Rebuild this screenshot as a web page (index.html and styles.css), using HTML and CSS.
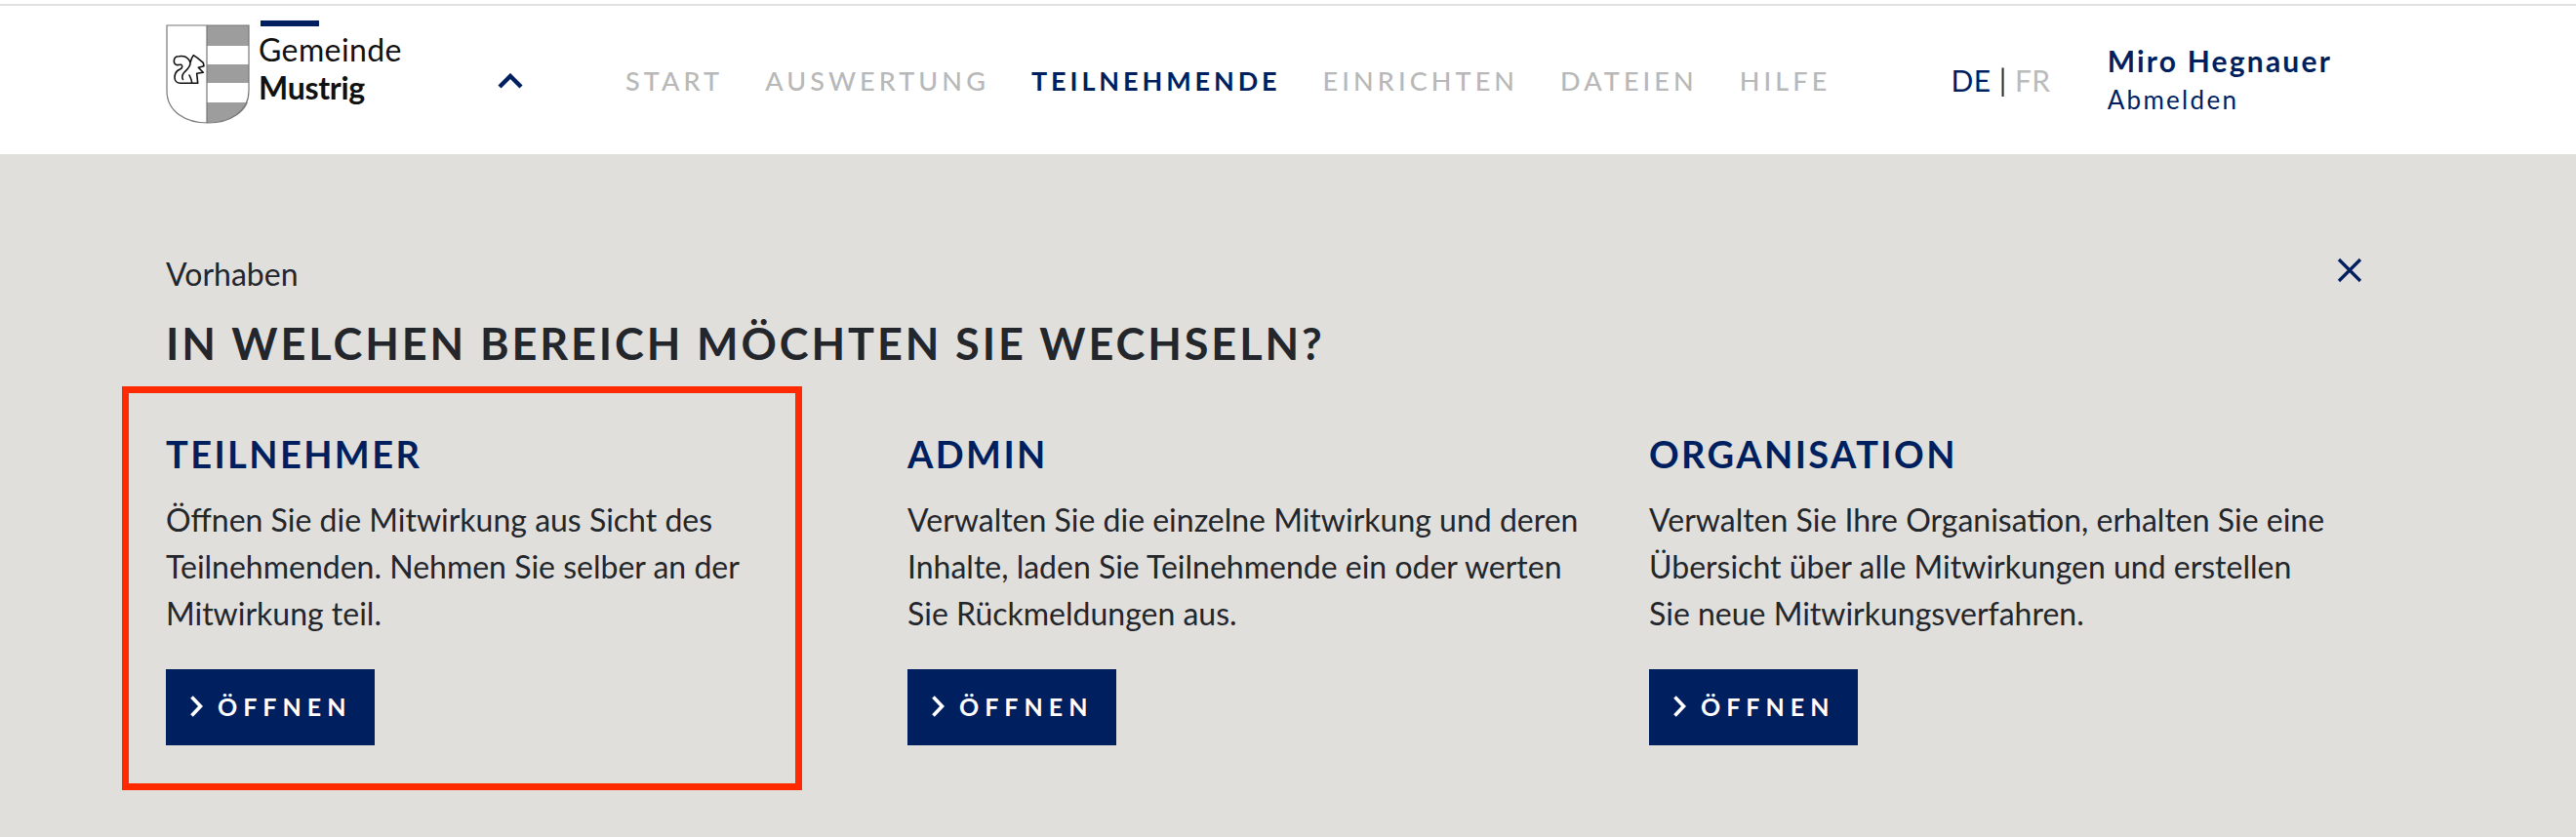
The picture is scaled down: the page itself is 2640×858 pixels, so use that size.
FILE: index.html
```html
<!DOCTYPE html>
<html lang="de">
<head>
<meta charset="utf-8">
<title>Gemeinde Mustrig</title>
<link rel="stylesheet" href="styles.css">
</head>
<body>
<div class="top-strip"></div>
<header class="header">
  <div class="brand">
    <svg class="crest" viewBox="0 0 86 102" width="86" height="102">
      <path d="M42 1H85V22H42Z M42 41H85V60H42Z M42 80H84C80 92 64 100 42 101Z" fill="#9d9d9d"/>
      <path d="M1 1H85V68C85 90 65 101 43 101C21 101 1 90 1 68Z M42 1V101" fill="none" stroke="#777" stroke-width="1.2"/>
      <path d="M31.7 60.3H15C11 60.3 9 57.5 9 54.3C9 51 10 49.3 11.7 47.7C13.5 46 16.7 46 16.7 43.5C16.7 41 15.7 41 13 41.5C10.5 42 8.3 40.5 8.3 37.7C8.3 34.5 10.5 32.7 13.3 32.7C17 32.2 20 32.5 21.7 34.3C23.8 35.8 24.8 37.8 25 39.3L26.7 34.3L28.3 31.7L32.3 34.3L38.3 39.3L39 42.7L33.3 44.3L38.3 49.3L31.7 50.3L32.7 60.3M25 39.3C25.5 43 22 46 19 49C16.5 51.5 16.3 55 17.5 56.5M24 52C26 56 27 58 26.5 60.3" fill="none" stroke="#111" stroke-width="1.6" stroke-linejoin="round" stroke-linecap="round"/>
    </svg>
    <div class="brand-text">
      <span class="brand-rule"></span>
      <span class="brand-top">Gemeinde</span>
      <span class="brand-name">Mustrig</span>
    </div>
  </div>
  <svg class="caret" viewBox="0 0 26 16" width="26" height="16"><path d="M2 14L13 3L24 14" fill="none" stroke="#001f5f" stroke-width="4.4"/></svg>
  <nav class="nav">
    <a class="nav-link">START</a>
    <a class="nav-link">AUSWERTUNG</a>
    <a class="nav-link is-active">TEILNEHMENDE</a>
    <a class="nav-link">EINRICHTEN</a>
    <a class="nav-link">DATEIEN</a>
    <a class="nav-link">HILFE</a>
  </nav>
  <div class="lang"><span class="lang-on">DE</span> <span class="lang-sep">|</span> <span class="lang-off">FR</span></div>
  <div class="user">
    <strong class="user-name">Miro Hegnauer</strong>
    <a class="user-out">Abmelden</a>
  </div>
</header>
<main class="panel">
  <div class="panel-top">
    <div class="eyebrow">Vorhaben</div>
    <svg class="close" viewBox="0 0 26 26" width="26" height="26"><path d="M2 2L24 24M24 2L2 24" fill="none" stroke="#001f5f" stroke-width="3.2"/></svg>
  </div>
  <h1 class="title">IN WELCHEN BEREICH MÖCHTEN SIE WECHSELN?</h1>
  <div class="cols">
    <section class="col">
      <div class="highlight"></div>
      <h2 class="col-title">TEILNEHMER</h2>
      <p class="col-text">Öffnen Sie die Mitwirkung aus Sicht des<br>Teilnehmenden. Nehmen Sie selber an der<br>Mitwirkung teil.</p>
      <a class="btn"><svg class="btn-icon" viewBox="0 0 14 24" width="14" height="24"><path d="M2.5 2.5L11.5 12L2.5 21.5" fill="none" stroke="#fff" stroke-width="3.6"/></svg>ÖFFNEN</a>
    </section>
    <section class="col">
      <h2 class="col-title">ADMIN</h2>
      <p class="col-text">Verwalten Sie die einzelne Mitwirkung und deren<br>Inhalte, laden Sie Teilnehmende ein oder werten<br>Sie Rückmeldungen aus.</p>
      <a class="btn"><svg class="btn-icon" viewBox="0 0 14 24" width="14" height="24"><path d="M2.5 2.5L11.5 12L2.5 21.5" fill="none" stroke="#fff" stroke-width="3.6"/></svg>ÖFFNEN</a>
    </section>
    <section class="col">
      <h2 class="col-title">ORGANISATION</h2>
      <p class="col-text">Verwalten Sie Ihre Organisation, erhalten Sie eine<br>Übersicht über alle Mitwirkungen und erstellen<br>Sie neue Mitwirkungsverfahren.</p>
      <a class="btn"><svg class="btn-icon" viewBox="0 0 14 24" width="14" height="24"><path d="M2.5 2.5L11.5 12L2.5 21.5" fill="none" stroke="#fff" stroke-width="3.6"/></svg>ÖFFNEN</a>
    </section>
  </div>
</main>
</body>
</html>
```
FILE: styles.css
```css
* { box-sizing: border-box; }
html, body { margin: 0; height: 100%; }
body { background: #e1dfdb; font-family: "Lato", "Liberation Sans", sans-serif; color: #23262b; overflow: hidden; }
.top-strip { height: 4px; background: #fff; }
.header { height: 154px; background: #fff; border-top: 2px solid #e0e0e3; display: flex; align-items: center; padding-left: 170px; }
.brand { display: flex; width: 340px; align-items: flex-start; margin-top: -16px; }
.crest { display: block; margin-top: 4px; }
.brand-text { display: flex; flex-direction: column; margin-left: 9px; }
.brand-rule { width: 60px; height: 6px; background: #001f5f; margin-left: 2px; }
.brand-top { font-size: 32px; line-height: 39px; margin-top: 4px; color: #111; letter-spacing: 0.4px; }
.brand-name { font-size: 32px; line-height: 39px; font-weight: 700; color: #111; letter-spacing: -0.3px; }
.caret { margin-top: 2px; }
.nav { display: flex; gap: 43px; margin-left: 105px; }
.nav-link { font-size: 27px; letter-spacing: 4.1px; color: #b8b8b8; font-weight: 500; }
.nav-link.is-active { color: #001f5f; font-weight: 700; letter-spacing: 3.9px; }
.lang { margin-left: 123px; font-size: 30px; letter-spacing: 0.5px; }
.lang-on { color: #001f5f; }
.lang-sep { color: #333; }
.lang-off { color: #bbb; }
.user { display: flex; flex-direction: column; margin-left: 58px; }
.user-name { font-size: 30px; color: #001f5f; letter-spacing: 2.2px; line-height: 40px; font-weight: 700; }
.user-out { font-size: 26px; color: #001f5f; letter-spacing: 2.3px; line-height: 40px; }
.panel { padding: 104px 200px 0 170px; }
.panel-top { display: flex; justify-content: space-between; align-items: center; height: 36px; }
.eyebrow { font-size: 32px; color: #23262b; }
.close { margin-right: 19px; margin-bottom: 7px; }
.title { margin: 26px 0 0; font-size: 45px; line-height: 56px; font-weight: 700; letter-spacing: 2.9px; color: #23262b; }
.cols { display: grid; grid-template-columns: repeat(3, 760px); margin-top: 61px; }
.col { position: relative; }
.highlight { position: absolute; left: -45px; top: -45px; width: 697px; height: 414px; border: 7px solid #ff2a00; }
.col-title { margin: 0; font-size: 38px; line-height: 48px; letter-spacing: 2.4px; font-weight: 700; color: #001f5f; }
.col-text { margin: 20px 0 0; font-size: 32px; line-height: 48px; color: #23262b; }
.btn { display: flex; align-items: center; height: 78px; width: 214px; margin-top: 33px; background: #001f5f; color: #fff; font-size: 25px; line-height: 30px; font-weight: 700; letter-spacing: 6px; padding: 0 0 2px 24px; }
.btn-icon { margin-right: 15px; }
```
